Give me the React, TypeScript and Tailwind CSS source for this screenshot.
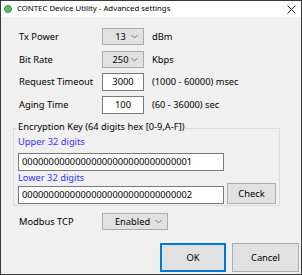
import React from "react";

const font = { fontFamily: '"Noto Sans", "Open Sans", sans-serif' };

function Chevron() {
  return (
    <svg width="7" height="5" viewBox="0 0 7 5" className="shrink-0">
      <path d="M0.5 1 L3.5 4 L6.5 1" fill="none" stroke="#707070" strokeWidth="1" />
    </svg>
  );
}

function Combo({ value, w }: { value: string; w: string }) {
  return (
    <div
      className={`${w} h-[17px] flex items-center justify-between pl-[7px] pr-[5px] bg-[#e1e1e1] border border-[#adadad] text-black`}
    >
      <span className="flex-1 text-center">{value}</span>
      <Chevron />
    </div>
  );
}

function Field({ value, w, center }: { value: string; w: string; center?: boolean }) {
  return (
    <div
      className={`${w} h-[18px] shrink-0 flex items-center bg-white border border-[#7a7a7a] text-black ${
        center ? "justify-center" : "pl-[3px]"
      }`}
    >
      {value}
    </div>
  );
}

export default function App() {
  return (
    <div
      className="w-[302px] h-[275px] border border-[#3a3a3a] bg-[#f0f0f0] flex flex-col text-[9.3px] leading-none text-black overflow-hidden"
      style={font}
    >
      {/* title bar */}
      <div className="h-[16px] bg-white flex items-center pl-[3px] pr-[5px] shrink-0">
        <div className="w-[8px] h-[8px] rounded-full bg-[#5fb85f] border border-[#3e9a3e]" />
        <span className="ml-[5px] text-[7.8px] text-black">CONTEC Device Utility - Advanced settings</span>
        <span className="ml-auto">
          <svg width="9" height="9" viewBox="0 0 9 9">
            <path d="M0.5 0.5 L8.5 8.5 M8.5 0.5 L0.5 8.5" stroke="#222" strokeWidth="1" />
          </svg>
        </span>
      </div>

      <div className="flex flex-col pt-[11px]">
        <div className="flex items-center h-[17px] pl-[18px]">
          <span className="w-[83px]">Tx Power</span>
          <Combo value="13" w="w-[42px]" />
          <span className="ml-[8px]">dBm</span>
        </div>
        <div className="flex items-center h-[17px] pl-[18px] mt-[6px]">
          <span className="w-[83px]">Bit Rate</span>
          <Combo value="250" w="w-[42px]" />
          <span className="ml-[8px]">Kbps</span>
        </div>
        <div className="flex items-center h-[18px] pl-[18px] mt-[5px]">
          <span className="w-[83px]">Request Timeout</span>
          <Field value="3000" w="w-[42px]" center />
          <span className="ml-[8px]">(1000 - 60000) msec</span>
        </div>
        <div className="flex items-center h-[18px] pl-[18px] mt-[5px]">
          <span className="w-[83px]">Aging Time</span>
          <Field value="100" w="w-[42px]" center />
          <span className="ml-[8px]">(60 - 36000) sec</span>
        </div>

        {/* group box */}
        <div className="relative ml-[12px] mt-[14px] w-[267px] border border-[#dcdcdc] pb-[1px]">
          <span className="absolute left-[3px] top-[-7px] leading-[10px] bg-[#f0f0f0] px-[1px]">
            Encryption Key (64 digits hex [0-9,A-F])
          </span>
          <div className="flex flex-col pl-[4px] pt-[8px]">
            <span className="text-[#3333ff] leading-[10px]">Upper 32 digits</span>
            <div className="mt-[6px]">
              <Field value="00000000000000000000000000000001" w="w-[206px]" />
            </div>
            <span className="text-[#3333ff] leading-[10px] mt-[2px]">Lower 32 digits</span>
            <div className="flex items-end">
              <Field value="00000000000000000000000000000002" w="w-[206px]" />
              <div className="ml-[3px] w-[49px] h-[21px] flex items-center justify-center bg-[#e1e1e1] border border-[#adadad]">
                Check
              </div>
            </div>
          </div>
        </div>

        <div className="flex items-center h-[17px] pl-[18px] mt-[7px]">
          <span className="w-[83px]">Modbus TCP</span>
          <Combo value="Enabled" w="w-[66px]" />
        </div>

        <div className="flex justify-end gap-[6px] mt-[13px] pr-[2px]">
          <div className="w-[66px] h-[29px] flex items-center justify-center bg-[#e1e1e1] border-2 border-[#0078d7]">
            OK
          </div>
          <div className="w-[67px] h-[29px] flex items-center justify-center bg-[#e1e1e1] border border-[#adadad]">
            Cancel
          </div>
        </div>
      </div>
    </div>
  );
}
